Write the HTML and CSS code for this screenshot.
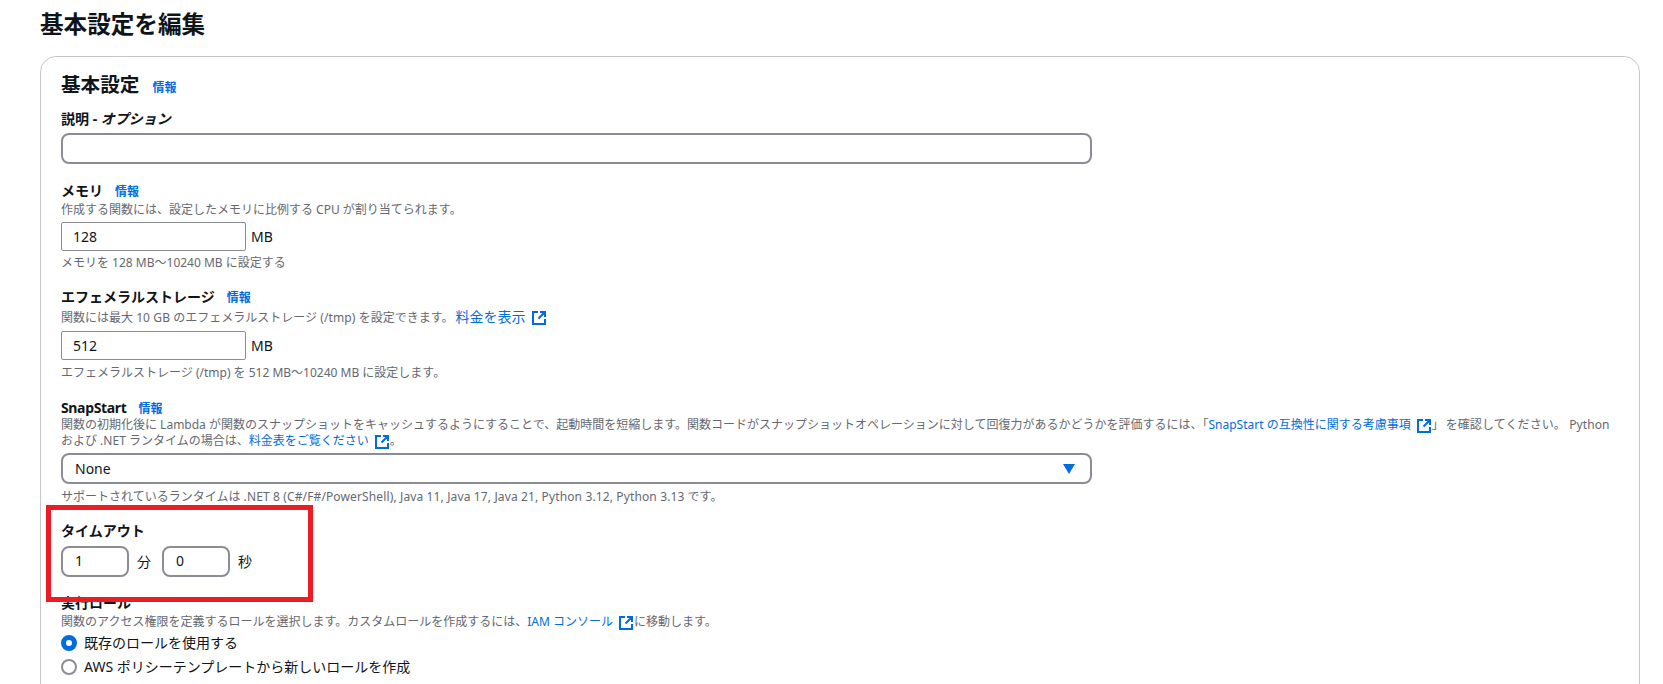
FILE: index.html
```html
<!DOCTYPE html>
<html lang="ja">
<head>
<meta charset="utf-8">
<title>基本設定を編集</title>
<link rel="stylesheet" href="styles.css">
</head>
<body>
<main class="page">
  <h1 class="page-title">基本設定を編集</h1>
  <section class="card">
    <div class="card-head"><h2 class="card-title">基本設定</h2><a class="info info-lg">情報</a></div>

    <div class="field f-desc">
      <div class="label">説明 - <i>オプション</i></div>
      <div class="box box-full"></div>
    </div>

    <div class="field f-mem">
      <div class="label">メモリ<a class="info">情報</a></div>
      <div class="help">作成する関数には、設定したメモリに比例する CPU が割り当てられます。</div>
      <div class="unit-row"><div class="box box-num">128</div><span class="unit">MB</span></div>
      <div class="help help-after">メモリを 128 MB～10240 MB に設定する</div>
    </div>

    <div class="field f-eph">
      <div class="label">エフェメラルストレージ<a class="info">情報</a></div>
      <div class="help">関数には最大 <span class="wide">10 GB</span> のエフェメラルストレージ <span class="wide">(/tmp)</span> を設定できます。<a class="link link-md">料金を表示<svg class="ext" viewBox="0 0 16 16"><path d="M7 2H2v12h12V9M9 2h5v5M14 2 7.5 8.5"/></svg></a></div>
      <div class="unit-row"><div class="box box-num">512</div><span class="unit">MB</span></div>
      <div class="help help-after">エフェメラルストレージ (/tmp) を 512 MB～10240 MB に設定します。</div>
    </div>

    <div class="field f-snap">
      <div class="label"><span class="tight">SnapStart</span><a class="info">情報</a></div>
      <div class="help help-snap">関数の初期化後に Lambda が関数のスナップショットをキャッシュするようにすることで、起動時間を短縮します。関数コードがスナップショットオペレーションに対して回復力があるかどうかを評価するには、「<a class="link">SnapStart の互換性に関する考慮事項<svg class="ext" viewBox="0 0 16 16"><path d="M7 2H2v12h12V9M9 2h5v5M14 2 7.5 8.5"/></svg></a>」<span class="after-link">を確認してください。 Python</span><br>および .NET ランタイムの場合は、<a class="link">料金表をご覧ください<svg class="ext" viewBox="0 0 16 16"><path d="M7 2H2v12h12V9M9 2h5v5M14 2 7.5 8.5"/></svg></a>。</div>
      <div class="box box-full box-select">None<svg class="caret" viewBox="0 0 12 10"><path d="M0 0h12L6 10z"/></svg></div>
      <div class="help help-select">サポートされているランタイムは <span class="wide">.NET 8 (C#/F#/PowerShell), Java 11, Java 17, Java 21, Python 3.12, Python 3.13</span> です。</div>
    </div>

    <div class="field f-time">
      <div class="label">タイムアウト</div>
      <div class="time-row">
        <div class="box box-time">1</div><span class="time-unit">分</span>
        <div class="box box-time">0</div><span class="time-unit">秒</span>
      </div>
    </div>

    <div class="field f-role">
      <div class="label">実行ロール</div>
      <div class="help">関数のアクセス権限を定義するロールを選択します。カスタムロールを作成するには、<a class="link">IAM コンソール<svg class="ext" viewBox="0 0 16 16"><path d="M7 2H2v12h12V9M9 2h5v5M14 2 7.5 8.5"/></svg></a>に移動します。</div>
      <div class="radio radio-first"><span class="dot dot-on"></span>既存のロールを使用する</div>
      <div class="radio"><span class="dot"></span>AWS ポリシーテンプレートから新しいロールを作成</div>
    </div>
  </section>
</main>
<div class="highlight"></div>
</body>
</html>
```
FILE: styles.css
```css
* { box-sizing: border-box; }
html, body { margin: 0; height: 684px; overflow: hidden; background: #fff; }
body {
  position: relative;
  font-family: "Noto Sans", "Noto Sans CJK JP", sans-serif;
  font-size: 14px;
  line-height: 20px;
  color: #0f141a;
}
.page { padding: 9px 23px 0 40px; }
.page-title { margin: 0; font-size: 23.6px; line-height: 30px; font-weight: 700; }
.card {
  margin-top: 17px;
  height: 660px;
  border: 1px solid #c6c6cd;
  border-radius: 16px;
  padding: 17px 20px 0 20px;
}
.card-head { display: flex; align-items: center; height: 22px; }
.card-title { margin: 0; font-size: 19.6px; line-height: 22px; font-weight: 700; }
.info { color: #006ce0; font-size: 12px; font-weight: 700; line-height: 20px; }
.info-lg { margin-left: 13px; margin-top: 5px; }
.field { display: block; }
.label { font-weight: 700; font-size: 14px; line-height: 20px; }
.label i { font-style: italic; }
.label .info { margin-left: 12px; }
.tight { letter-spacing: -0.35px; }
.help { font-size: 12px; line-height: 17px; color: #656871; white-space: nowrap; }
.help-after { margin-top: 3px; }
.help-select { margin-top: 4px; }
.help-snap { line-height: 16px; }
.wide { letter-spacing: 0.13px; }
.after-link { margin-left: 2px; letter-spacing: 0.1px; }
.link { color: #006ce0; }
.link-md { font-size: 14px; margin-left: 2px; }
.ext {
  width: 16px; height: 16px;
  margin: -3px 0 -3px 5px;
  vertical-align: middle;
  fill: none;
  stroke: #006ce0;
  stroke-width: 2;
}
.box {
  border: 2px solid #8c8c94;
  border-radius: 8px;
  background: #fff;
  font-size: 14px;
  line-height: 20px;
  color: #0f141a;
}
.box-full { width: 1031px; height: 31px; padding: 3px 12px; }
.box-select { display: flex; align-items: center; justify-content: space-between; padding-right: 15px; }
.caret { width: 12px; height: 10px; fill: #006ce0; }
.unit-row { display: flex; align-items: center; margin-top: 4px; }
.box-num {
  width: 185px; height: 29px;
  border: 1px solid #8c8c94;
  border-radius: 2px;
  padding: 4px 11px;
}
.unit { margin-left: 5px; }
.f-desc { margin-top: 13px; }
.f-desc .box { margin-top: 4px; }
.f-mem { margin-top: 17px; }
.f-mem .label { margin-bottom: -1px; }
.f-eph { margin-top: 16px; }
.f-eph .unit-row { margin-top: 5px; }
.f-eph .help-after { margin-top: 4px; }
.f-snap { margin-top: 17px; }
.f-snap .label { margin-bottom: -2px; }
.f-snap .box { margin-top: 4px; }
.f-time { margin-top: 16px; }
.time-row { display: flex; align-items: center; margin-top: 5px; }
.box-time { width: 68px; height: 31px; padding: 3px 12px; }
.time-unit { width: 33px; padding-left: 8px; }
.f-role { margin-top: 16px; }
.radio { display: flex; align-items: center; height: 24px; font-size: 14px; }
.radio-first { margin-top: 1px; }
.dot {
  width: 16px; height: 16px; margin-right: 7px;
  border: 2px solid #8c8c94;
  border-radius: 50%;
  background: #fff;
}
.dot-on { border: 5px solid #006ce0; }
.highlight {
  position: absolute;
  left: 46px; top: 505px;
  width: 267px; height: 97px;
  border: 5px solid #ec1c24;
}
```
